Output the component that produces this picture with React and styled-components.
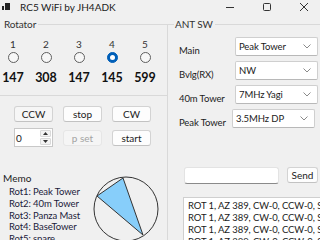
import React from 'react'
import styled, { createGlobalStyle } from 'styled-components'

const GlobalStyle = createGlobalStyle`
  html, body {
    margin: 0;
    padding: 0;
    background: #f0f0f0;
  }
  body {
    width: 320px;
    height: 240px;
    overflow: hidden;
    font-family: Lato, "Noto Sans", sans-serif;
    color: #1b1b1b;
  }
`

const rotators = [
  { id: 1, az: 147 },
  { id: 2, az: 308 },
  { id: 3, az: 147 },
  { id: 4, az: 145, selected: true },
  { id: 5, az: 599 },
]

const antennas = [
  { label: 'Main', value: 'Peak Tower' },
  { label: 'Bvlg(RX)', value: 'NW' },
  { label: '40m Tower', value: '7MHz Yagi' },
  { label: 'Peak Tower', value: '3.5MHz DP', shift: -3 },
]

const memo = ['Rot1: Peak Tower', 'Rot2: 40m Tower', 'Rot3: Panza Mast', 'Rot4: BaseTower', 'Rot5: spare']

const logLine = 'ROT 1, AZ 389, CW-0, CCW-0, SW-1, SEL-4'

const App = () => {
  return (
    <Window>
      <GlobalStyle />
      <TitleBar>
        <AppIcon width="8" height="8" viewBox="0 0 8 8">
          <rect x="0" y="3" width="2" height="4" fill="#222" />
          <rect x="3" y="0" width="5" height="7" fill="#222" />
        </AppIcon>
        <Title>RC5 WiFi by JH4ADK</Title>
        <Controls>
          <svg width="10" height="10" viewBox="0 0 10 10">
            <line x1="1" y1="5.5" x2="9" y2="5.5" stroke="#333" strokeWidth="1" />
          </svg>
          <svg width="10" height="10" viewBox="0 0 10 10">
            <rect x="1.5" y="1.5" width="7" height="7" rx="1" fill="none" stroke="#333" strokeWidth="1" />
          </svg>
          <svg width="10" height="10" viewBox="0 0 10 10">
            <path d="M1 1 L9 9 M9 1 L1 9" stroke="#333" strokeWidth="1" />
          </svg>
        </Controls>
      </TitleBar>

      <Body>
        <LeftColumn>
          <RotatorBox>
            <GroupHead>
              <GroupLabel>Rotator</GroupLabel>
            </GroupHead>
            <RotatorGrid>
              {rotators.map(r => (
                <RotCell key={r.id}>
                  <RotNum>{r.id}</RotNum>
                  <Radio $selected={r.selected} />
                  <Azimuth>{r.az}</Azimuth>
                </RotCell>
              ))}
            </RotatorGrid>
          </RotatorBox>

          <ButtonGrid>
            <Button $pressed>CCW</Button>
            <Button>stop</Button>
            <Button>CW</Button>
            <Spinner>
              <SpinValue>0</SpinValue>
              <SpinButtons>
                <SpinArrow>
                  <svg width="5" height="3" viewBox="0 0 5 3"><path d="M0 3 L2.5 0 L5 3 Z" fill="#333" /></svg>
                </SpinArrow>
                <SpinArrow>
                  <svg width="5" height="3" viewBox="0 0 5 3"><path d="M0 0 L2.5 3 L5 0 Z" fill="#333" /></svg>
                </SpinArrow>
              </SpinButtons>
            </Spinner>
            <Button disabled>p set</Button>
            <Button>start</Button>
          </ButtonGrid>

          <MemoRow>
            <MemoText>
              <MemoTitle>Memo</MemoTitle>
              {memo.map(m => (
                <MemoLine key={m}>{m}</MemoLine>
              ))}
            </MemoText>
            <Dial width="70" height="70" viewBox="0 0 70 70">
              <circle cx="35" cy="35" r="32" fill="none" stroke="#333" strokeWidth="1" />
              <polygon points="32,4 6,22 52,61" fill="#87cefa" stroke="#333" strokeWidth="1" />
            </Dial>
          </MemoRow>
        </LeftColumn>

        <AntBox>
          <GroupHead $corner>
            <GroupLabel>ANT SW</GroupLabel>
          </GroupHead>
          <AntBody>
            <AntRows>
              {antennas.map(a => (
                <AntRow key={a.label}>
                  <AntLabel>{a.label}</AntLabel>
                  <Combo $shift={a.shift || 0}>
                    <span>{a.value}</span>
                    <svg width="8" height="5" viewBox="0 0 8 5">
                      <polyline points="0.5,0.5 4,4 7.5,0.5" fill="none" stroke="#8a8a8a" strokeWidth="1" />
                    </svg>
                  </Combo>
                </AntRow>
              ))}
            </AntRows>

            <SendRow>
              <TextInput />
              <SendButton>Send</SendButton>
            </SendRow>

            <LogBox>
              {[0, 1, 2, 3].map(i => (
                <LogLine key={i}>{logLine}</LogLine>
              ))}
            </LogBox>
          </AntBody>
        </AntBox>
      </Body>
    </Window>
  )
}

export default App

const Window = styled.div`
  width: 320px;
  height: 240px;
  display: flex;
  flex-direction: column;
  overflow: hidden;
  background: #f0f0f0;
`

const TitleBar = styled.div`
  height: 15px;
  flex: none;
  display: flex;
  align-items: center;
  padding-left: 2px;
`

const AppIcon = styled.svg`
  margin-right: 10px;
  margin-top: -1px;
`

const Title = styled.div`
  font-size: 10px;
  line-height: 15px;
  color: #1b1b1b;
`

const Controls = styled.div`
  margin-left: auto;
  display: flex;
  align-items: center;
  gap: 27px;
  padding-right: 11px;
  margin-top: -2px;
`

const Body = styled.div`
  flex: 1;
  display: flex;
  align-items: flex-start;
  min-height: 0;
`

const LeftColumn = styled.div`
  width: 167px;
  flex: none;
  display: flex;
  flex-direction: column;

  & > * {
    flex: none;
  }
`

const GroupHead = styled.div`
  height: 18px;
  flex: none;
  display: flex;
  align-items: center;
  padding-left: ${p => (p.$corner ? '0' : '3px')};

  &::before {
    content: '';
    display: ${p => (p.$corner ? 'block' : 'none')};
    width: 7px;
    height: 9px;
    align-self: flex-end;
    box-sizing: border-box;
    border-top: 1px solid #d9d9d9;
    border-left: 1px solid #d9d9d9;
  }

  &::after {
    content: '';
    flex: 1;
    border-top: 1px solid #d9d9d9;
    margin-top: 1px;
  }
`

const GroupLabel = styled.span`
  font-size: 10px;
  line-height: 18px;
  letter-spacing: -0.1px;
  color: #333;
  padding: 0 2px 0 1px;
`

const RotatorBox = styled.div`
  height: 81px;
  box-sizing: border-box;
  border-bottom: 1px solid #d9d9d9;
`

const RotatorGrid = styled.div`
  display: grid;
  grid-template-columns: repeat(5, 26px);
  column-gap: 7px;
  margin-top: 5px;
`

const RotCell = styled.div`
  display: flex;
  flex-direction: column;
  align-items: center;
`

const RotNum = styled.div`
  font-size: 10px;
  line-height: 12px;
  color: #333;
`

const Radio = styled.div`
  width: 11px;
  height: 11px;
  box-sizing: border-box;
  border-radius: 50%;
  margin-top: 2px;
  border: 1px solid ${p => (p.$selected ? '#005fb8' : '#5f5f5f')};
  background: ${p => (p.$selected ? '#005fb8' : '#f7f7f7')};
  display: flex;
  align-items: center;
  justify-content: center;

  &::after {
    content: '';
    display: ${p => (p.$selected ? 'block' : 'none')};
    width: 5px;
    height: 5px;
    border-radius: 50%;
    background: #fff;
  }
`

const Azimuth = styled.div`
  font-size: 12.5px;
  font-weight: 700;
  line-height: 16px;
  margin-top: 7px;
  color: #111;
`

const ButtonGrid = styled.div`
  display: grid;
  grid-template-columns: 39px 39px 39px;
  grid-template-rows: 16px 19px;
  column-gap: 10px;
  row-gap: 6px;
  align-items: center;
  margin: 10px 0 0 14px;
`

const Button = styled.button`
  height: 16px;
  padding: 0;
  box-sizing: border-box;
  font-family: Lato, "Noto Sans", sans-serif;
  font-size: 10px;
  line-height: 14px;
  color: ${p => (p.disabled ? '#a3a3a3' : '#1b1b1b')};
  background: ${p => (p.disabled ? '#f5f5f5' : p.$pressed ? '#f6f6f6' : '#fdfdfd')};
  border: 1px solid ${p => (p.disabled ? '#e6e6e6' : '#d3d3d3')};
  border-bottom-color: ${p => (p.disabled ? '#e6e6e6' : '#c2c2c2')};
  border-radius: 3px;
`

const Spinner = styled.div`
  height: 19px;
  box-sizing: border-box;
  border: 1px solid #c8c8c8;
  background: #fff;
  display: flex;
  align-items: center;
`

const SpinValue = styled.div`
  flex: 1;
  font-size: 10px;
  padding-left: 1px;
`

const SpinButtons = styled.div`
  width: 11px;
  height: 15px;
  margin-right: 1px;
  display: flex;
  flex-direction: column;
  gap: 1px;
`

const SpinArrow = styled.div`
  flex: 1;
  display: flex;
  align-items: center;
  justify-content: center;
  background: #f3f3f3;
  border: 1px solid #d9d9d9;
  border-radius: 1px;
`

const MemoRow = styled.div`
  display: flex;
  margin-top: 25px;
`

const MemoText = styled.div`
  width: 88px;
  padding-left: 3px;
`

const MemoTitle = styled.div`
  font-size: 10px;
  line-height: 12px;
  margin-bottom: 2px;
  color: #1b1b1b;
`

const MemoLine = styled.div`
  font-size: 9.5px;
  letter-spacing: -0.1px;
  line-height: 11.75px;
  padding-left: 6px;
  color: #1b1b3b;
  white-space: nowrap;
`

const Dial = styled.svg`
  margin-top: 2px;
  flex: none;
`

const AntBox = styled.div`
  width: 175px;
  height: 225px;
  flex: none;
  display: flex;
  flex-direction: column;
`

const AntBody = styled.div`
  flex: 1;
  min-height: 0;
  border-left: 1px solid #d9d9d9;
`

const AntRows = styled.div`
  display: flex;
  flex-direction: column;
  gap: 5px;
  margin-top: 4px;
`

const AntRow = styled.div`
  display: flex;
  align-items: center;
  height: 19px;
`

const AntLabel = styled.div`
  width: 67px;
  flex: none;
  box-sizing: border-box;
  padding-left: 11px;
  padding-top: 7px;
  font-size: 9.5px;
  letter-spacing: -0.1px;
  color: #222;
  white-space: nowrap;
`

const Combo = styled.div`
  width: 83px;
  height: 19px;
  flex: none;
  margin-left: ${p => p.$shift}px;
  box-sizing: border-box;
  display: flex;
  align-items: center;
  justify-content: space-between;
  padding: 0 6px 0 3px;
  background: #fff;
  border: 1px solid #cfcfcf;
  border-bottom-color: #b8b8b8;
  border-radius: 2px;
  font-size: 9.5px;
  letter-spacing: -0.1px;
  color: #1b1b1b;
`

const SendRow = styled.div`
  display: flex;
  align-items: flex-start;
  gap: 8px;
  margin: 39px 0 0 16px;
`

const TextInput = styled.div`
  width: 95px;
  height: 17px;
  box-sizing: border-box;
  background: #fff;
  border: 1px solid #e3e3e3;
  border-bottom-color: #8a8a8a;
  border-radius: 3px;
`

const SendButton = styled(Button)`
  width: 31px;
`

const LogBox = styled.div`
  margin: 13px 0 0 15px;
  height: 60px;
  box-sizing: border-box;
  background: #fff;
  border: 1px solid #cfcfcf;
  padding: 2px 0 0 4px;
  overflow: hidden;
`

const LogLine = styled.div`
  font-size: 9.5px;
  letter-spacing: -0.1px;
  line-height: 12px;
  white-space: nowrap;
  color: #1b1b1b;
`
